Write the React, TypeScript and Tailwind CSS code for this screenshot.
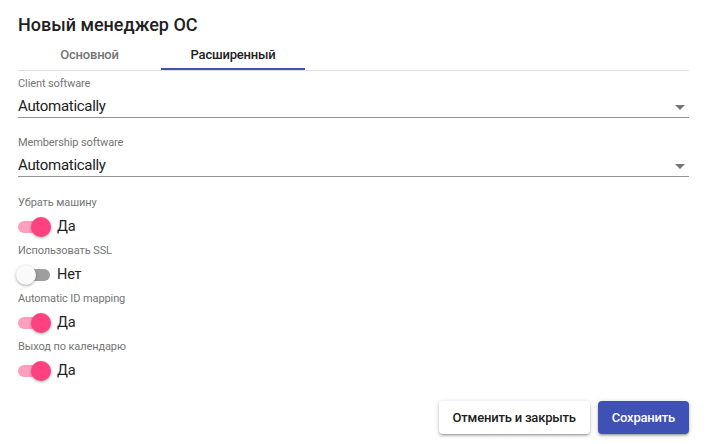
import React from 'react'

/* Диалог «Новый менеджер ОС», вкладка «Расширенный» */

const FONT = { fontFamily: 'Roboto, "Noto Sans", sans-serif' }

function SelectField({ label, value }: { label: string; value: string }) {
  return (
    <div>
      <div className="text-[11px] leading-[14px] tracking-[-0.1px] text-[#757575]">{label}</div>
      <div className="relative flex items-start border-b border-[#949494] pt-[6px] pb-[1px]">
        <span className="text-[15px] leading-[19px] tracking-[-0.3px] text-[#212121]">{value}</span>
        <svg
          className="absolute right-[-3px] top-[4px]"
          width="24"
          height="24"
          viewBox="0 0 24 24"
          fill="#757575"
        >
          <path d="M7 10l5 5 5-5z" />
        </svg>
      </div>
    </div>
  )
}

function Toggle({ label, on }: { label: string; on: boolean }) {
  return (
    <div>
      <div className="text-[11px] leading-[14px] tracking-[-0.1px] text-[#757575]">{label}</div>
      <div className="flex h-[34px] items-center">
        <div className="relative h-[20px] w-[34px]">
          <div
            className={
              'absolute left-0 top-[4px] h-[12px] w-[32px] rounded-full ' +
              (on ? 'bg-[#ff9fc0]' : 'bg-[#9e9e9e]')
            }
          />
          <div
            className={
              'absolute top-0 h-[20px] w-[20px] rounded-full shadow-[0_1px_3px_rgba(0,0,0,0.35)] ' +
              (on ? 'left-[13px] bg-[#ff4081]' : 'left-[-2px] bg-[#fafafa]')
            }
          />
        </div>
        <span className="ml-[5px] text-[14.5px] leading-[18px] tracking-[-0.2px] text-[#212121]">{on ? 'Да' : 'Нет'}</span>
      </div>
    </div>
  )
}

export default function App() {
  return (
    <div className="h-[444px] w-[707px] bg-white px-[18px]" style={FONT}>
      <h1 className="pt-[10px] text-[18px] font-medium leading-[29px] text-[#212121]">Новый менеджер ОС</h1>

      {/* Tabs */}
      <div className="flex border-b border-[#e0e0e0]">
        <div className="relative flex h-[31px] w-[143px] items-center justify-center text-[13px] font-medium tracking-[-0.2px] text-[#757575]">
          Основной
        </div>
        <div className="relative flex h-[31px] w-[144px] items-center justify-center text-[13px] font-medium tracking-[-0.2px] text-[#212121]">
          Расширенный
          <div className="absolute bottom-0 left-0 h-[2px] w-full bg-[#3f51b5]" />
        </div>
      </div>

      <div className="mt-[6px]">
        <SelectField label="Client software" value="Automatically" />
      </div>
      <div className="mt-[18px]">
        <SelectField label="Membership software" value="Automatically" />
      </div>

      <div className="mt-[19px]">
        <Toggle label="Убрать машину" on />
        <Toggle label="Использовать SSL" on={false} />
        <Toggle label="Automatic ID mapping" on />
        <Toggle label="Выход по календарю" on />
      </div>

      <div className="mt-[13px] flex justify-end gap-[8px]">
        <button className="h-[33px] rounded-[4px] bg-white px-[14px] text-[13px] font-medium tracking-[-0.2px] text-[#212121] shadow-[0_1px_5px_rgba(0,0,0,0.2),0_2px_2px_rgba(0,0,0,0.14),0_3px_1px_-2px_rgba(0,0,0,0.12)]">
          Отменить и закрыть
        </button>
        <button className="h-[33px] rounded-[4px] bg-[#3f51b5] px-[14px] text-[13px] font-medium tracking-[-0.2px] text-white shadow-[0_1px_5px_rgba(0,0,0,0.2),0_2px_2px_rgba(0,0,0,0.14),0_3px_1px_-2px_rgba(0,0,0,0.12)]">
          Сохранить
        </button>
      </div>
    </div>
  )
}
